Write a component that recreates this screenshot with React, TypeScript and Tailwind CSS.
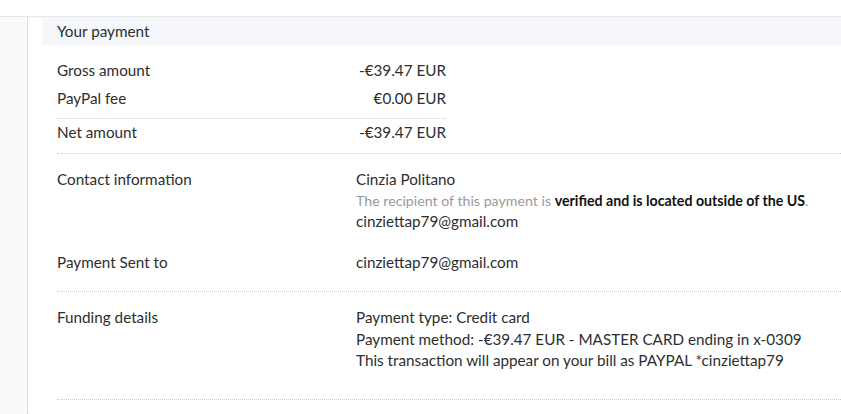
import React from 'react';

const Row: React.FC<{ label: string; children: React.ReactNode; className?: string }> = ({ label, children, className = '' }) => (
    <div className={`flex ${className}`}>
        <div className="w-[299px] shrink-0">{label}</div>
        <div className="flex-1">{children}</div>
    </div>
);

const App: React.FC = () => {
    return (
        <div className="w-[841px] h-[414px] overflow-hidden bg-white text-[15.25px] leading-[21px] text-[#2c2e2f]" style={{ fontFamily: 'Lato, "Open Sans", sans-serif' }}>
            {/* top strip */}
            <div className="h-[17px] border-b border-[#e6e7e9] shadow-[0_1px_1px_rgba(0,0,0,0.03)]" />

            <div className="flex h-[397px]">
                {/* left rail */}
                <div className="w-[28px] shrink-0 bg-[#fafafa] border-r border-dotted border-[#c8c8c8]" />

                <div className="flex-1 pl-[14px]">
                    {/* header */}
                    <div className="h-[28px] bg-[#f5f7fa] pl-[15px] flex items-center">Your payment</div>

                    <div className="pl-[15px]">
                        {/* amounts */}
                        <div className="border-b border-dotted border-[#c9c9c9] pb-[8px]">
                            <div className="w-[389px]">
                                <div className="pt-[11px] pb-[6px] border-b border-dotted border-[#c9c9c9]">
                                    <div className="flex h-[28px] items-center justify-between">
                                        <span>Gross amount</span>
                                        <span>-€39.47 EUR</span>
                                    </div>
                                    <div className="flex h-[28px] items-center justify-between">
                                        <span>PayPal fee</span>
                                        <span>€0.00 EUR</span>
                                    </div>
                                </div>
                                <div className="flex h-[26px] items-center justify-between">
                                    <span>Net amount</span>
                                    <span>-€39.47 EUR</span>
                                </div>
                            </div>
                        </div>

                        {/* contact */}
                        <div className="border-b border-dotted border-[#c9c9c9] pt-[15px] pb-[18px]">
                            <Row label="Contact information">
                                <div>Cinzia Politano</div>
                                <div className="text-[14.2px] text-[#9a9a9a]">
                                    The recipient of this payment is{' '}
                                    <span className="font-bold text-[#111]">verified and is located outside of the US</span>.
                                </div>
                                <div>cinziettap79@gmail.com</div>
                            </Row>
                            <Row label="Payment Sent to" className="mt-[20px]">
                                <div>cinziettap79@gmail.com</div>
                            </Row>
                        </div>

                        {/* funding */}
                        <div className="border-b border-dotted border-[#c9c9c9] pt-[15px] pb-[27px]">
                            <Row label="Funding details">
                                <div className="leading-[21.5px]">
                                    <div>Payment type: Credit card</div>
                                    <div>Payment method: -€39.47 EUR - MASTER CARD ending in x-0309</div>
                                    <div>This transaction will appear on your bill as PAYPAL *cinziettap79</div>
                                </div>
                            </Row>
                        </div>
                    </div>
                </div>
            </div>
        </div>
    );
};

export default App;
